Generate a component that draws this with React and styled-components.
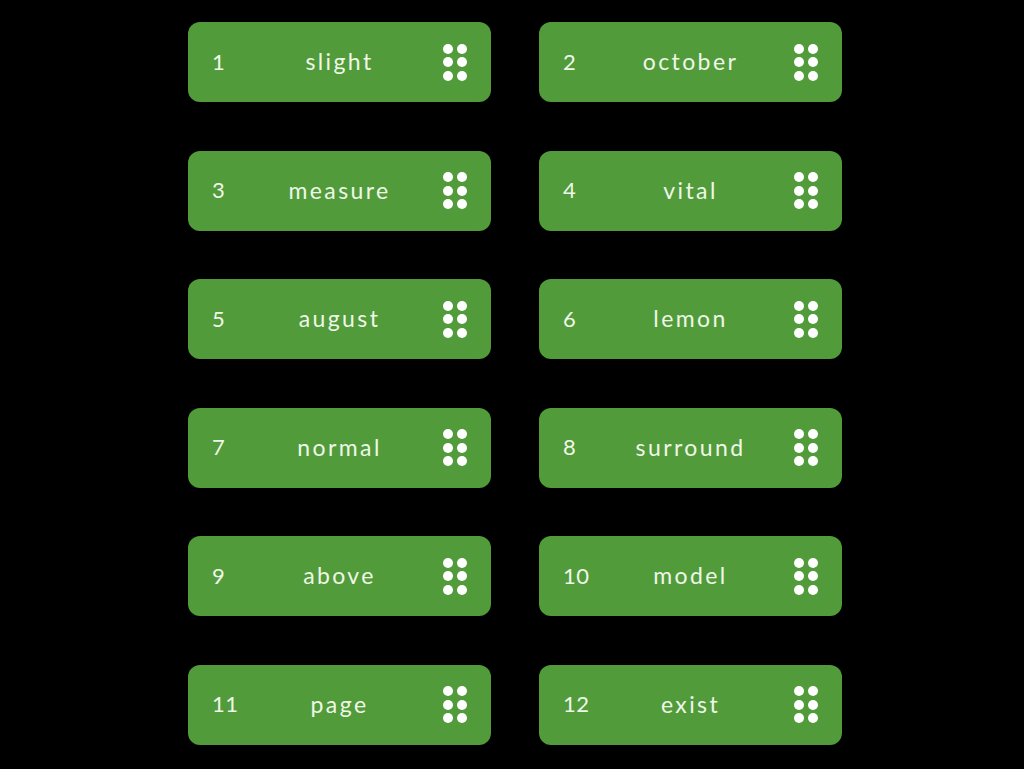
import React from 'react';
import styled, { createGlobalStyle } from 'styled-components';

const GlobalStyle = createGlobalStyle`
  html, body {
    margin: 0;
    padding: 0;
    background: #000;
  }
  body {
    font-family: "Lato", "Noto Sans", sans-serif;
  }
`;

const Page = styled.div`
  width: 1024px;
  height: 769px;
  background: #000;
  box-sizing: border-box;
  padding: 22px 0 0 188px;
  overflow: hidden;
`;

const Grid = styled.div`
  display: grid;
  grid-template-columns: 303px 303px;
  column-gap: 48px;
  row-gap: 48.6px;
`;

const Card = styled.div`
  position: relative;
  height: 80px;
  background: #529b3a;
  border-radius: 12px;
  display: flex;
  align-items: center;
  justify-content: space-between;
  padding: 0 24px;
  box-sizing: border-box;
  color: #eef7e8;
`;

const Num = styled.span`
  font-size: 22px;
  width: 40px;
  letter-spacing: 0.5px;
  margin-bottom: 2px;
`;

const Word = styled.span`
  position: absolute;
  left: 0;
  right: 0;
  text-align: center;
  font-size: 23px;
  letter-spacing: 2.4px;
  margin-bottom: 2px;
  pointer-events: none;
`;

const Handle = styled.div`
  display: grid;
  grid-template-columns: 10px 10px;
  grid-auto-rows: 10px;
  column-gap: 4px;
  row-gap: 3.5px;
`;

const Dot = styled.span`
  width: 10px;
  height: 10px;
  border-radius: 50%;
  background: #fff;
`;

const words = [
  'slight', 'october', 'measure', 'vital', 'august', 'lemon',
  'normal', 'surround', 'above', 'model', 'page', 'exist',
];

const App = () => {
  return (
    <Page>
      <GlobalStyle />
      <Grid>
        {words.map((w, i) => (
          <Card key={w}>
            <Num>{i + 1}</Num>
            <Word>{w}</Word>
            <Handle>
              {[0, 1, 2, 3, 4, 5].map((d) => <Dot key={d} />)}
            </Handle>
          </Card>
        ))}
      </Grid>
    </Page>
  );
};

export default App;
